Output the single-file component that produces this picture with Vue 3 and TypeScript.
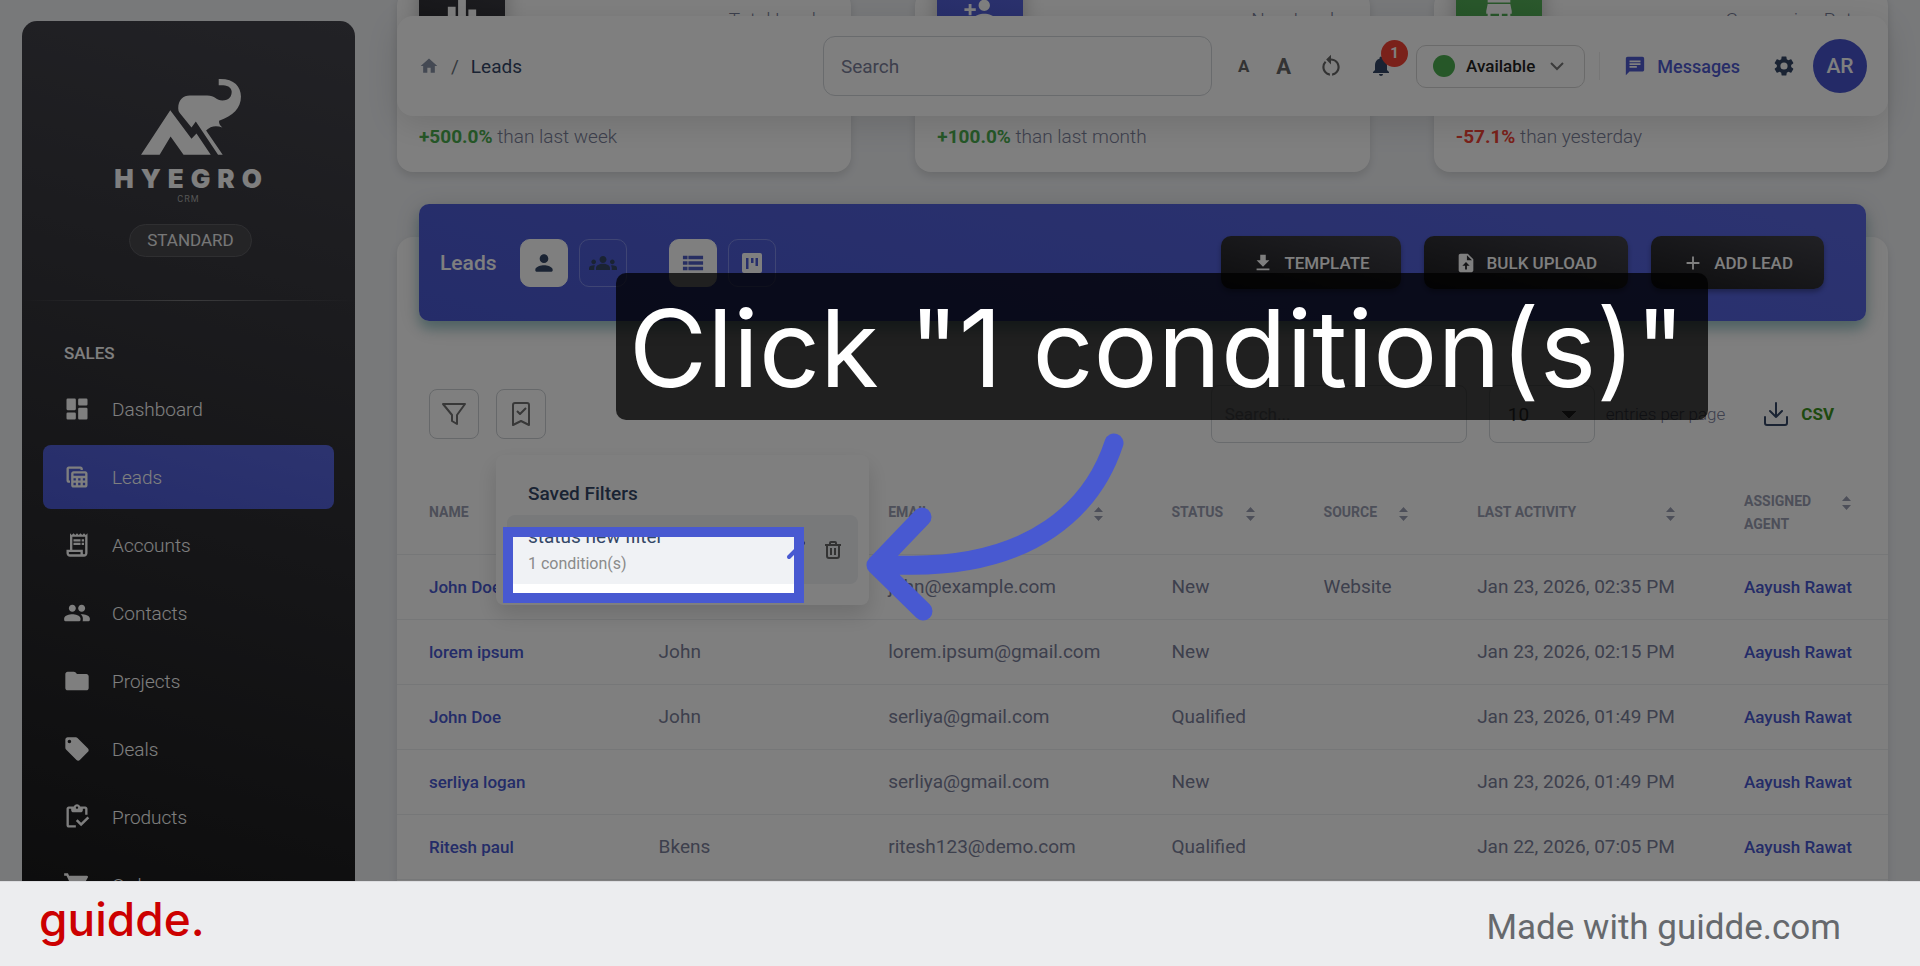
<script setup lang="ts">
import { h, ref } from 'vue'

const icons: Record<string, string> = {
  dashboard: 'M4 3h6a1 1 0 0 1 1 1v8a1 1 0 0 1-1 1H4a1 1 0 0 1-1-1V4a1 1 0 0 1 1-1zM14 3h6a1 1 0 0 1 1 1v4a1 1 0 0 1-1 1h-6a1 1 0 0 1-1-1V4a1 1 0 0 1 1-1zM4 15h6a1 1 0 0 1 1 1v4a1 1 0 0 1-1 1H4a1 1 0 0 1-1-1v-4a1 1 0 0 1 1-1zM14 11h6a1 1 0 0 1 1 1v8a1 1 0 0 1-1 1h-6a1 1 0 0 1-1-1v-8a1 1 0 0 1 1-1z',
  leads: 'M19 7H9c-1.1 0-2 .9-2 2v10c0 1.1.9 2 2 2h10c1.1 0 2-.9 2-2V9c0-1.1-.9-2-2-2zm0 2v2H9V9h10zm-6 6v-2h2v2h-2zm2 2v2h-2v-2h2zm-4-2H9v-2h2v2zm6-2h2v2h-2v-2zm-8 4h2v2H9v-2zm8 2v-2h2v2h-2zM6 17H5c-1.1 0-2-.9-2-2V5c0-1.1.9-2 2-2h10c1.1 0 2 .9 2 2v1h-2V5H5v10h1v2z',
  accounts: 'M19.5 3.5 18 2l-1.5 1.5L15 2l-1.5 1.5L12 2l-1.5 1.5L9 2 7.5 3.5 6 2v14H3v3c0 1.66 1.34 3 3 3h12c1.66 0 3-1.34 3-3V2l-1.5 1.5zM15 20H6c-.55 0-1-.45-1-1v-1h10v2zm4-1c0 .55-.45 1-1 1s-1-.45-1-1v-3H8V5h11v14zM9 7h6v2H9zM16 7h2v2h-2zM9 10h6v2H9zM16 10h2v2h-2z',
  contacts: 'M16 11c1.66 0 3-1.34 3-3s-1.34-3-3-3-3 1.34-3 3 1.34 3 3 3zm-8 0c1.66 0 3-1.34 3-3S9.66 5 8 5 5 6.34 5 8s1.34 3 3 3zm0 2c-2.33 0-7 1.17-7 3.5V18c0 .55.45 1 1 1h12c.55 0 1-.45 1-1v-1.5c0-2.33-4.67-3.5-7-3.5zm8 0c-.29 0-.62.02-.97.05 1.16.84 1.97 1.97 1.97 3.45V18c0 .35-.07.69-.18 1H22c.55 0 1-.45 1-1v-1.5c0-2.33-4.67-3.5-7-3.5z',
  projects: 'M10.6 4.6c-.4-.4-.9-.6-1.4-.6H4c-1.1 0-2 .9-2 2v12c0 1.1.9 2 2 2h16c1.1 0 2-.9 2-2V8c0-1.1-.9-2-2-2h-8l-1.4-1.4z',
  deals: 'm21.41 11.58-9-9C12.05 2.22 11.55 2 11 2H4c-1.1 0-2 .9-2 2v7c0 .55.22 1.05.59 1.42l9 9c.36.36.86.58 1.41.58.55 0 1.05-.22 1.41-.59l7-7c.37-.36.59-.86.59-1.41 0-.55-.23-1.06-.59-1.42zM5.5 7C4.67 7 4 6.33 4 5.5S4.67 4 5.5 4 7 4.67 7 5.5 6.33 7 5.5 7z',
  products: 'M5 5h2v1c0 1.1.9 2 2 2h6c1.1 0 2-.9 2-2V5h2v5h2V5c0-1.1-.9-2-2-2h-4.18C14.4 1.84 13.3 1 12 1s-2.4.84-2.82 2H5c-1.1 0-2 .9-2 2v14c0 1.1.9 2 2 2h6v-2H5V5zm7-2c.55 0 1 .45 1 1s-.45 1-1 1-1-.45-1-1 .45-1 1-1zM21 11.5 15.51 17l-3.01-3-1.5 1.5 4.51 4.5L22.5 13z',
  orders: 'M7 18c-1.1 0-2 .9-2 2s.9 2 2 2 2-.9 2-2-.9-2-2-2zM1 2v2h2l3.6 7.59-1.35 2.45C4.52 15.37 5.48 17 7 17h12v-2H7.42l1.1-2h7.45c.75 0 1.41-.41 1.75-1.03l3.58-6.49A1 1 0 0 0 20.42 4H5.21l-.94-2H1zm16 16c-1.1 0-2 .9-2 2s.9 2 2 2 2-.9 2-2-.9-2-2-2z',
  home: 'M10 20v-6h4v6h5v-8h3L12 3 2 12h3v8z',
  restart: 'M12 5V1.5L7.5 6 12 10.5V7c3.31 0 6 2.69 6 6 0 2.97-2.17 5.43-5 5.91v2.02c3.95-.49 7-3.85 7-7.93 0-4.42-3.58-8-8-8zM6 13c0-1.65.67-3.15 1.76-4.24L6.34 7.34A7.97 7.97 0 0 0 4 13c0 4.08 3.05 7.44 7 7.93v-2.02c-2.83-.48-5-2.94-5-5.91z',
  bell: 'M12 22c1.1 0 2-.9 2-2h-4c0 1.1.9 2 2 2zm6-6v-5c0-3.07-1.63-5.64-4.5-6.32V4a1.5 1.5 0 0 0-3 0v.68C7.64 5.36 6 7.92 6 11v5l-2 2v1h16v-1l-2-2z',
  message: 'M20 2H4c-1.1 0-2 .9-2 2v18l4-4h14c1.1 0 2-.9 2-2V4c0-1.1-.9-2-2-2zM6 9h12v2H6V9zm8 5H6v-2h8v2zm4-6H6V6h12v2z',
  gear: 'M19.14 12.94c.04-.3.06-.61.06-.94s-.02-.64-.07-.94l2.03-1.58c.18-.14.23-.41.12-.61l-1.92-3.32c-.12-.22-.37-.29-.59-.22l-2.39.96c-.5-.38-1.03-.7-1.62-.94l-.36-2.54A.48.48 0 0 0 13.92 2.4h-3.84c-.24 0-.43.17-.47.41l-.36 2.54c-.59.24-1.13.57-1.62.94l-2.39-.96c-.22-.08-.47 0-.59.22L2.74 8.87c-.12.21-.08.47.12.61l2.03 1.58c-.05.3-.09.63-.09.94s.02.64.07.94l-2.03 1.58c-.18.14-.23.41-.12.61l1.92 3.32c.12.22.37.29.59.22l2.39-.96c.5.38 1.03.7 1.62.94l.36 2.54c.05.24.24.41.48.41h3.84c.24 0 .44-.17.47-.41l.36-2.54c.59-.24 1.13-.56 1.62-.94l2.39.96c.22.08.47 0 .59-.22l1.92-3.32c.12-.22.07-.47-.12-.61l-2.01-1.58zM12 15.6A3.6 3.6 0 1 1 12 8.4a3.6 3.6 0 0 1 0 7.2z',
  person: 'M12 12c2.21 0 4-1.79 4-4s-1.79-4-4-4-4 1.79-4 4 1.79 4 4 4zm0 2c-2.67 0-8 1.34-8 4v1c0 .55.45 1 1 1h14c.55 0 1-.45 1-1v-1c0-2.66-5.33-4-8-4z',
  groups: 'M12 12.75c1.63 0 3.07.39 4.24.9 1.08.48 1.76 1.56 1.76 2.73V18H6v-1.61c0-1.18.68-2.26 1.76-2.73 1.17-.52 2.61-.91 4.24-.91zM4 13c1.1 0 2-.9 2-2s-.9-2-2-2-2 .9-2 2 .9 2 2 2zm1.13 1.1C4.76 14.04 4.39 14 4 14c-.99 0-1.93.21-2.78.58A2.01 2.01 0 0 0 0 16.43V18h4.5v-1.61c0-.83.23-1.61.63-2.29zM20 13c1.1 0 2-.9 2-2s-.9-2-2-2-2 .9-2 2 .9 2 2 2zm4 3.43c0-.81-.48-1.53-1.22-1.85A6.95 6.95 0 0 0 20 14c-.39 0-.76.04-1.13.1.4.68.63 1.46.63 2.29V18H24v-1.57zM12 6c1.66 0 3 1.34 3 3s-1.34 3-3 3-3-1.34-3-3 1.34-3 3-3z',
  list: 'M1 4h5v4H1zM7 4h16v4H7zM1 10h5v4H1zM7 10h16v4H7zM1 16h5v4H1zM7 16h16v4H7z',
  kanban: 'M4 2h16a2 2 0 0 1 2 2v16a2 2 0 0 1-2 2H4a2 2 0 0 1-2-2V4a2 2 0 0 1 2-2zM6 7v11h2.5V7zM11 7v5h2.5V7zM15.5 7v8H18V7z',
  download: 'M19 9h-4V3H9v6H5l7 7 7-7zM5 18v2h14v-2H5z',
  upload: 'M14 2H6c-1.1 0-2 .9-2 2v16c0 1.1.89 2 2 2h12c1.1 0 2-.9 2-2V8l-6-6zm-1 7V3.5L18.5 9H13zM11 19v-4H8l4-4 4 4h-3v4z',
  add: 'M19 13h-6v6h-2v-6H5v-2h6V5h2v6h6z',
  bars: 'M7.5 21H2V9h5.5zM14.75 3h-5.5v18h5.5zM22 11h-5.5v10H22z',
  personAdd: 'M15 12c2.21 0 4-1.79 4-4s-1.79-4-4-4-4 1.79-4 4 1.79 4 4 4zm-9-2V7H4v3H1v2h3v3h2v-3h3v-2H6zm9 4c-2.67 0-8 1.34-8 4v2h16v-2c0-2.66-5.33-4-8-4z',
  store: 'M20 4H4v2h16V4zm1 10v-2l-1-5H4l-1 5v2h1v6h10v-6h4v6h2v-6h1zm-9 4H6v-4h6v4z',
}

const Icon = (props: { name: string; size?: number }) =>
  h('svg', { width: props.size ?? 24, height: props.size ?? 24, viewBox: '0 0 24 24', fill: 'currentColor', 'fill-rule': 'evenodd', 'aria-hidden': 'true' }, [
    h('path', { d: icons[props.name] }),
  ])

const nav = [
  { label: 'Dashboard', icon: 'dashboard' },
  { label: 'Leads', icon: 'leads' },
  { label: 'Accounts', icon: 'accounts' },
  { label: 'Contacts', icon: 'contacts' },
  { label: 'Projects', icon: 'projects' },
  { label: 'Deals', icon: 'deals' },
  { label: 'Products', icon: 'products' },
  { label: 'Orders', icon: 'orders' },
]

const stats = [
  { label: 'Total Leads', icon: 'bars', tone: 'dark', change: '+500.0%', trend: 'up', period: 'than last week' },
  { label: 'New Leads', icon: 'personAdd', tone: 'blue', change: '+100.0%', trend: 'up', period: 'than last month' },
  { label: 'Conversion Rate', icon: 'store', tone: 'green', change: '-57.1%', trend: 'down', period: 'than yesterday' },
]

const columns = [
  { label: 'Name', cls: 'c-name' },
  { label: '', cls: 'c-company' },
  { label: 'Email', cls: 'c-email' },
  { label: 'Status', cls: 'c-status' },
  { label: 'Source', cls: 'c-source' },
  { label: 'Last Activity', cls: 'c-activity' },
  { label: 'Assigned Agent', cls: 'c-agent' },
]

const leads = [
  { name: 'John Doe', company: '', email: 'john@example.com', status: 'New', source: 'Website', activity: 'Jan 23, 2026, 02:35 PM' },
  { name: 'lorem ipsum', company: 'John', email: 'lorem.ipsum@gmail.com', status: 'New', source: '', activity: 'Jan 23, 2026, 02:15 PM' },
  { name: 'John Doe', company: 'John', email: 'serliya@gmail.com', status: 'Qualified', source: '', activity: 'Jan 23, 2026, 01:49 PM' },
  { name: 'serliya logan', company: '', email: 'serliya@gmail.com', status: 'New', source: '', activity: 'Jan 23, 2026, 01:49 PM' },
  { name: 'Ritesh paul', company: 'Bkens', email: 'ritesh123@demo.com', status: 'Qualified', source: '', activity: 'Jan 22, 2026, 07:05 PM' },
]

const globalSearch = ref('')
const tableSearch = ref('')
const pageSize = ref('10')
</script>

<template>
  <div class="frame">
    <div class="stage">
      <aside class="sidebar">
        <div class="brand">
          <svg class="brand-mark" viewBox="420 235 310 235" aria-hidden="true">
            <path d="M423 466 511 332 575 418 590 402 633 466H551L512 411 479 466Z" />
            <path d="M535 326C535 301 550 288 570 288H622C646 288 650 303 668 303C688 303 697 290 696 275C694 260 680 256 657 257V238C702 236 724 260 724 291C724 326 700 350 658 364Q657 376 668 384C650 377 632 379 619 393L669 466H655L588 366 575 384 539 340Q535 335 535 326Z" />
          </svg>
          <div class="brand-name">HYEGRO</div>
          <div class="brand-sub">CRM</div>
          <span class="plan">STANDARD</span>
        </div>
        <hr class="side-rule" />
        <h2 class="side-title">SALES</h2>
        <nav class="nav">
          <a v-for="item in nav" :key="item.label" href="#" class="nav-item" :class="{ active: item.label === 'Leads' }">
            <Icon :name="item.icon" :size="28" />
            <span>{{ item.label }}</span>
          </a>
        </nav>
      </aside>

      <main class="main">
        <header class="topbar">
          <div class="crumbs">
            <a href="#" aria-label="Home"><Icon name="home" :size="20" /></a>
            <span class="slash">/</span>
            <span>Leads</span>
          </div>
          <input v-model="globalSearch" class="field global-search" type="text" placeholder="Search" aria-label="Search" />
          <div class="tools">
            <button class="plain small-a" type="button" aria-label="Decrease text size">A</button>
            <button class="plain big-a" type="button" aria-label="Increase text size">A</button>
            <button class="plain" type="button" aria-label="Reset text size"><Icon name="restart" :size="26" /></button>
          </div>
          <button class="plain bell" type="button" aria-label="Notifications"><Icon name="bell" :size="24" /><span class="badge">1</span></button>
          <button class="availability" type="button">
            <span class="dot"></span>Available
            <svg width="14" height="9" viewBox="0 0 14 9" fill="none" stroke="#777" stroke-width="2" aria-hidden="true"><path d="M1 1l6 6 6-6" /></svg>
          </button>
          <span class="tool-rule"></span>
          <a href="#" class="messages"><Icon name="message" :size="22" />Messages</a>
          <button class="plain settings" type="button" aria-label="Settings"><Icon name="gear" :size="24" /></button>
          <button class="avatar" type="button">AR</button>
        </header>

        <section class="stats">
          <article v-for="s in stats" :key="s.label" class="stat">
            <div class="stat-top">
              <span class="stat-icon" :class="s.tone"><Icon :name="s.icon" :size="34" /></span>
              <span class="stat-label">{{ s.label }}</span>
            </div>
            <p class="stat-foot"><b :class="s.trend">{{ s.change }}</b> {{ s.period }}</p>
          </article>
        </section>

        <section class="card">
          <div class="banner">
            <h1>Leads</h1>
            <div class="toggles">
              <button class="tile on" type="button" aria-label="My leads"><Icon name="person" :size="26" /></button>
              <button class="tile" type="button" aria-label="Team leads"><Icon name="groups" :size="28" /></button>
            </div>
            <div class="toggles views">
              <button class="tile on accent" type="button" aria-label="List view"><Icon name="list" :size="22" /></button>
              <button class="tile light" type="button" aria-label="Board view"><Icon name="kanban" :size="24" /></button>
            </div>
            <div class="actions">
              <button type="button"><Icon name="download" :size="22" />TEMPLATE</button>
              <button type="button"><Icon name="upload" :size="22" />BULK UPLOAD</button>
              <button type="button"><Icon name="add" :size="22" />ADD LEAD</button>
            </div>
          </div>

          <div class="toolbar">
            <button class="square" type="button" aria-label="Filter">
              <svg width="28" height="28" viewBox="0 0 28 28" fill="none" stroke="currentColor" stroke-width="2" stroke-linejoin="round" aria-hidden="true"><path d="M3 4h22l-8 11v9l-5-3v-6z" /></svg>
            </button>
            <div class="saved">
              <button class="square" type="button" aria-label="Saved filters">
                <svg width="28" height="28" viewBox="0 0 28 28" fill="none" stroke="currentColor" stroke-width="2" stroke-linejoin="round" aria-hidden="true"><path d="M6 25V5q0-2 2-2h12q2 0 2 2v20l-8-4zM10 11l3 3 6-6" /></svg>
              </button>
              <div class="popover">
                <h3>Saved Filters</h3>
                <div class="saved-item">
                  <div class="saved-text">
                    <strong>status new filter</strong>
                    <span>1 condition(s)</span>
                  </div>
                  <button class="plain edit" type="button" aria-label="Edit filter">
                    <svg width="24" height="24" viewBox="0 0 24 24" fill="none" stroke="currentColor" stroke-width="4" stroke-linecap="round" aria-hidden="true"><path d="M3 19 17 5" /></svg>
                  </button>
                  <button class="plain" type="button" aria-label="Delete filter">
                    <svg width="18" height="20" viewBox="0 0 18 20" fill="none" stroke="currentColor" stroke-width="2" aria-hidden="true"><path d="M1 5h16M3 5v11q0 2 2 2h8q2 0 2-2V5M6 5V3q0-1 1-1h4q1 0 1 1v2M7 8v7M11 8v7" /></svg>
                  </button>
                </div>
              </div>
            </div>
            <input v-model="tableSearch" class="field table-search" type="text" placeholder="Search..." aria-label="Search leads" />
            <select id="page-size" v-model="pageSize" class="page-size">
              <option>10</option>
              <option>25</option>
            </select>
            <label class="entries" for="page-size">entries per page</label>
            <button class="plain csv" type="button">
              <svg width="24" height="24" viewBox="0 0 24 24" fill="none" stroke="#344767" stroke-width="2" stroke-linecap="round" stroke-linejoin="round" aria-hidden="true"><path d="M12 1v14M6 9l6 6 6-6M1 15v6q0 2 2 2h18q2 0 2-2v-6" /></svg>
              CSV
            </button>
          </div>

          <table class="leads">
            <thead>
              <tr>
                <th v-for="c in columns" :key="c.cls" :class="c.cls" scope="col">
                  <div class="th">
                    <span>{{ c.label }}</span>
                    <svg v-if="c.label" width="9" height="16" viewBox="0 0 9 16" fill="currentColor" aria-hidden="true"><path d="M0 6 4.5 1 9 6zM0 10 4.5 15 9 10z" /></svg>
                  </div>
                </th>
              </tr>
            </thead>
            <tbody>
              <tr v-for="(l, i) in leads" :key="i">
                <td><a href="#">{{ l.name }}</a></td>
                <td>{{ l.company }}</td>
                <td>{{ l.email }}</td>
                <td>{{ l.status }}</td>
                <td>{{ l.source }}</td>
                <td>{{ l.activity }}</td>
                <td><a href="#">Aayush Rawat</a></td>
              </tr>
            </tbody>
          </table>
        </section>
      </main>

      <div class="spotlight"></div>
      <svg class="arrow" width="264" height="200" viewBox="860 425 264 200" fill="none" stroke="#4859d1" stroke-width="19" stroke-linecap="round" stroke-linejoin="round" aria-hidden="true">
        <path d="M1114 443C1096 498 1040 576 880 564M922 517 876 565 923 611" />
      </svg>
      <div class="callout">Click "1 condition(s)"</div>
    </div>

    <footer class="footer">
      <span class="logo">guidde.</span>
      <span class="credit">Made with guidde.com</span>
    </footer>
  </div>
</template>

<style>
body {
  margin: 0;
}
</style>

<style scoped>
.frame,
.frame * {
  box-sizing: border-box;
}
.frame {
  display: flex;
  flex-direction: column;
  height: 100vh;
  font-family: Roboto, 'Liberation Sans', sans-serif;
  font-size: 19px;
  color: #7b809a;
}
.frame button,
.frame input,
.frame select {
  font-family: inherit;
}
a {
  color: inherit;
  text-decoration: none;
}
h1, h2, h3, p {
  margin: 0;
}
svg {
  flex: none;
}
.plain {
  display: inline-flex;
  align-items: center;
  justify-content: center;
  padding: 0;
  border: 0;
  background: none;
  color: #666;
}
.stage {
  position: relative;
  flex: 1;
  min-height: 0;
  overflow: hidden;
  display: flex;
  gap: 42px;
  padding: 0 32px 0 22px;
  background: #f0f2f5;
}

/* Sidebar */
.sidebar {
  flex: none;
  width: 333px;
  height: 1200px;
  margin-top: 21px;
  padding: 0 21px;
  border-radius: 15px;
  background: linear-gradient(195deg, #44444c, #1a1a1b 75%);
  color: #fff;
}
.brand {
  display: flex;
  flex-direction: column;
  align-items: center;
  padding-top: 57px;
}
.brand-mark {
  width: 103px;
  height: 78px;
  margin-left: 6px;
  fill: #fff;
}
.brand-name {
  margin: 8px 0 0 6px;
  font: 900 26px/30px Inter, sans-serif;
  letter-spacing: 7px;
}
.brand-sub {
  font-size: 9px;
  line-height: 10px;
  letter-spacing: 1px;
  color: #aaa;
}
.plan {
  margin: 20px 0 0 4px;
  padding: 0 17px;
  border: 1px solid #5e5e63;
  border-radius: 17px;
  background: #48484d;
  font-size: 17px;
  font-weight: 400;
  line-height: 31px;
  color: #eee;
}
.side-rule {
  height: 1px;
  margin: 43px -21px 0;
  border: 0;
  background: linear-gradient(90deg, transparent, #77777a, transparent);
}
.side-title {
  margin: 42px 0 14px 21px;
  font-size: 17px;
  font-weight: 500;
  line-height: 20px;
}
.nav {
  display: flex;
  flex-direction: column;
  gap: 4px;
}
.nav-item {
  display: flex;
  align-items: center;
  gap: 21px;
  height: 64px;
  padding-left: 20px;
  border-radius: 8px;
  font-weight: 300;
}
.nav-item.active {
  background: linear-gradient(15deg, #4c5ad4, #5967df);
}

/* Top bar */
.main {
  position: relative;
  flex: 1;
  min-width: 0;
}
.topbar {
  position: absolute;
  z-index: 3;
  top: 16px;
  left: 0;
  right: 0;
  height: 100px;
  display: flex;
  align-items: center;
  padding: 0 21px 0 22px;
  border-radius: 16px;
  background: #fff;
  box-shadow: 0 8px 32px rgba(0, 0, 0, 0.12);
}
.crumbs {
  flex: 1;
  display: flex;
  align-items: center;
  gap: 12px;
  color: #344767;
}
.crumbs a {
  display: flex;
  color: #8892a6;
}
.slash {
  color: #6c757d;
}
.field {
  border: 1px solid #d2d6da;
  border-radius: 12px;
  background: #fff;
  color: #495057;
  font-size: 19px;
}
.field::placeholder {
  color: #7b809a;
  opacity: 1;
}
.global-search {
  width: 389px;
  height: 60px;
  padding: 0 17px;
}
.tools {
  display: flex;
  align-items: center;
  gap: 27px;
  margin-left: 26px;
}
.small-a {
  font-size: 17px;
  font-weight: 700;
}
.big-a {
  font-size: 22px;
  font-weight: 700;
}
.bell {
  position: relative;
  margin-left: 25px;
  color: #344767;
}
.badge {
  position: absolute;
  top: -14px;
  left: 12px;
  width: 27px;
  height: 27px;
  border-radius: 50%;
  background: #f44335;
  color: #fff;
  font-size: 15px;
  font-weight: 700;
  line-height: 27px;
}
.availability {
  display: flex;
  align-items: center;
  gap: 11px;
  height: 43px;
  margin-left: 23px;
  padding: 0 20px 0 16px;
  border: 1px solid #d5d5d5;
  border-radius: 10px;
  background: #fff;
  color: #222;
  font-size: 17px;
  font-weight: 500;
}
.availability svg {
  margin-left: 4px;
}
.dot {
  width: 22px;
  height: 22px;
  border-radius: 50%;
  background: #4caf50;
}
.tool-rule {
  width: 1px;
  height: 28px;
  margin: 0 24px 0 14px;
  background: #ececec;
}
.messages {
  display: flex;
  align-items: center;
  gap: 11px;
  color: #4f5bd0;
  font-size: 18px;
  font-weight: 500;
}
.settings {
  margin: 0 17px 0 32px;
  color: #344767;
}
.avatar {
  width: 54px;
  height: 54px;
  padding: 0;
  border: 0;
  border-radius: 50%;
  background: #4855cf;
  color: #fff;
  font-size: 21px;
  font-weight: 500;
}

/* Stats */
.stats {
  display: grid;
  grid-template-columns: repeat(3, 1fr);
  gap: 64px;
  margin-top: -10px;
}
.stat {
  display: flex;
  flex-direction: column;
  justify-content: space-between;
  height: 182px;
  padding: 0 26px 23px 22px;
  border-radius: 16px;
  background: #fff;
  box-shadow: 0 4px 8px rgba(0, 0, 0, 0.12);
}
.stat-top {
  display: flex;
  justify-content: space-between;
}
.stat-icon {
  display: flex;
  align-items: center;
  justify-content: center;
  width: 86px;
  height: 86px;
  margin-top: -22px;
  border-radius: 12px;
  color: #fff;
  box-shadow: 0 6px 20px rgba(0, 0, 0, 0.25);
}
.dark { background: linear-gradient(195deg, #42424a, #222226); }
.blue { background: linear-gradient(195deg, #5a67df, #4b59d3); }
.green { background: linear-gradient(195deg, #5cb860, #46a34a); }
.stat-label {
  margin-top: 18px;
  font-weight: 300;
  line-height: 24px;
}
.stat-foot {
  font-weight: 300;
  line-height: 24px;
}
.stat-foot b { font-weight: 700; }
.up { color: #4caf50; }
.down { color: #f44335; }

/* Leads card */
.card {
  display: flow-root;
  height: 900px;
  margin-top: 65px;
  border-radius: 16px;
  background: #fff;
  box-shadow: 0 4px 8px rgba(0, 0, 0, 0.1);
}
.banner {
  display: flex;
  align-items: center;
  height: 117px;
  margin: -33px 22px 0;
  padding: 0 42px 0 21px;
  border-radius: 10px;
  background: linear-gradient(15deg, #4a59d3, #5967e2);
  box-shadow: 0 5px 24px rgba(0, 0, 0, 0.16), 0 8px 12px rgba(0, 140, 150, 0.3);
  color: #fff;
}
.banner h1 {
  font-size: 21px;
  font-weight: 500;
}
.toggles {
  display: flex;
  gap: 11px;
  margin-left: 23px;
}
.views {
  margin-left: 42px;
}
.tile {
  display: flex;
  align-items: center;
  justify-content: center;
  width: 48px;
  height: 48px;
  padding: 0;
  border: 1px solid #7f8be8;
  border-radius: 10px;
  background: none;
  color: #344767;
}
.tile.on {
  border-color: #fff;
  background: #fff;
}
.tile.accent { color: #4f5cc4; }
.tile.light { color: #fff; }
.actions {
  display: flex;
  gap: 23px;
  margin-left: auto;
}
.actions button {
  display: flex;
  align-items: center;
  gap: 10px;
  height: 53px;
  padding: 0 31px;
  border: 0;
  border-radius: 10px;
  background: linear-gradient(195deg, #42424a, #1c1c1e);
  box-shadow: 0 3px 5px rgba(0, 0, 0, 0.3);
  color: #fff;
  font-size: 17px;
  font-weight: 500;
}

/* Toolbar */
.toolbar {
  display: flex;
  align-items: center;
  margin-top: 64px;
  padding: 0 54px 0 32px;
}
.square {
  display: flex;
  align-items: center;
  justify-content: center;
  width: 50px;
  height: 50px;
  padding: 0;
  border: 1px solid #ccd0d4;
  border-radius: 8px;
  background: #fff;
  color: #707070;
}
.saved {
  position: relative;
  margin-left: 17px;
}
.popover {
  position: absolute;
  z-index: 2;
  top: 66px;
  left: 0;
  width: 373px;
  padding: 23px 11px 21px;
  border-radius: 8px;
  background: #fff;
  box-shadow: 0 10px 22px rgba(0, 0, 0, 0.14);
}
.popover h3 {
  margin: 0 0 6px 21px;
  font-size: 19px;
  font-weight: 500;
  line-height: 31px;
  color: #344767;
}
.saved-item {
  display: flex;
  align-items: center;
  height: 69px;
  padding: 0 16px 0 21px;
  border-radius: 8px;
  background: #f0f2f5;
}
.saved-text {
  flex: 1;
  display: flex;
  flex-direction: column;
}
.saved-text strong {
  font-size: 19px;
  font-weight: 400;
  line-height: 27px;
  color: #344767;
}
.saved-text span {
  font-size: 16px;
  line-height: 27px;
  color: #8a8a8a;
}
.edit {
  margin-right: 14px;
  color: #4859d1;
}
.table-search {
  width: 256px;
  height: 58px;
  margin-left: auto;
  padding: 0 13px;
  border-radius: 8px;
  font-size: 17px;
}
.table-search::placeholder {
  color: #b0b3ba;
}
.page-size {
  appearance: none;
  width: 106px;
  height: 58px;
  margin-left: 22px;
  padding: 0 18px;
  border: 1px solid #d2d6da;
  border-radius: 8px;
  background: linear-gradient(to bottom right, #555 50%, transparent 50%) 79px 25px / 7px 8px no-repeat,
    linear-gradient(to bottom left, #555 50%, transparent 50%) 72px 25px / 7px 8px no-repeat, #fff;
  color: #555;
  font-size: 19px;
}
.entries {
  margin-left: 11px;
  font-size: 17px;
  font-weight: 300;
}
.csv {
  gap: 13px;
  margin-left: 39px;
  color: #3c9420;
  font-size: 17px;
  font-weight: 700;
}

/* Table */
.leads {
  width: 100%;
  margin-top: 29px;
  table-layout: fixed;
  border-collapse: collapse;
}
.leads th,
.leads td {
  padding: 0 0 0 32px;
  border-bottom: 1px solid #eceef1;
  text-align: left;
  white-space: nowrap;
}
.leads th {
  height: 82px;
  padding-right: 37px;
  color: #9a9eb2;
  font-size: 14px;
  font-weight: 700;
  line-height: 23px;
  text-transform: uppercase;
  white-space: normal;
}
.th {
  display: flex;
  justify-content: space-between;
  gap: 8px;
}
.th svg {
  margin-top: 5px;
}
.leads td {
  height: 65px;
}
.leads td a {
  color: #4859d1;
  font-size: 17px;
  font-weight: 500;
}
.c-name { width: 15.4%; }
.c-company { width: 15.4%; }
.c-email { width: 19%; }
.c-status { width: 10.2%; }
.c-source { width: 10.3%; }
.c-activity { width: 17.9%; }
.c-agent { width: 11.8%; }

/* Guide overlay */
.spotlight {
  position: absolute;
  z-index: 5;
  left: 503px;
  top: 527px;
  width: 301px;
  height: 76px;
  border: 10px solid #4859d1;
  box-shadow: 0 0 0 3000px rgba(0, 0, 0, 0.5);
  pointer-events: none;
}
.arrow {
  position: absolute;
  z-index: 6;
  left: 860px;
  top: 425px;
  overflow: visible;
  pointer-events: none;
}
.callout {
  position: absolute;
  z-index: 7;
  left: 616px;
  top: 273px;
  width: 1092px;
  padding: 4px 0 0 13px;
  border-radius: 10px;
  background: rgba(0, 0, 0, 0.75);
  color: #fff;
  font: 400 107px/143px Inter, 'Liberation Sans', sans-serif;
  white-space: nowrap;
}

/* Footer */
.footer {
  flex: none;
  display: flex;
  align-items: center;
  justify-content: space-between;
  height: 85px;
  padding: 0 79px 0 39px;
  border-top: 1px solid #dcdde0;
  background: #ecedef;
}
.logo {
  padding-bottom: 10px;
  color: #c00;
  font: 500 46px/60px Inter, sans-serif;
}
.credit {
  padding-top: 6px;
  color: #66696d;
  font-size: 35px;
}
</style>
